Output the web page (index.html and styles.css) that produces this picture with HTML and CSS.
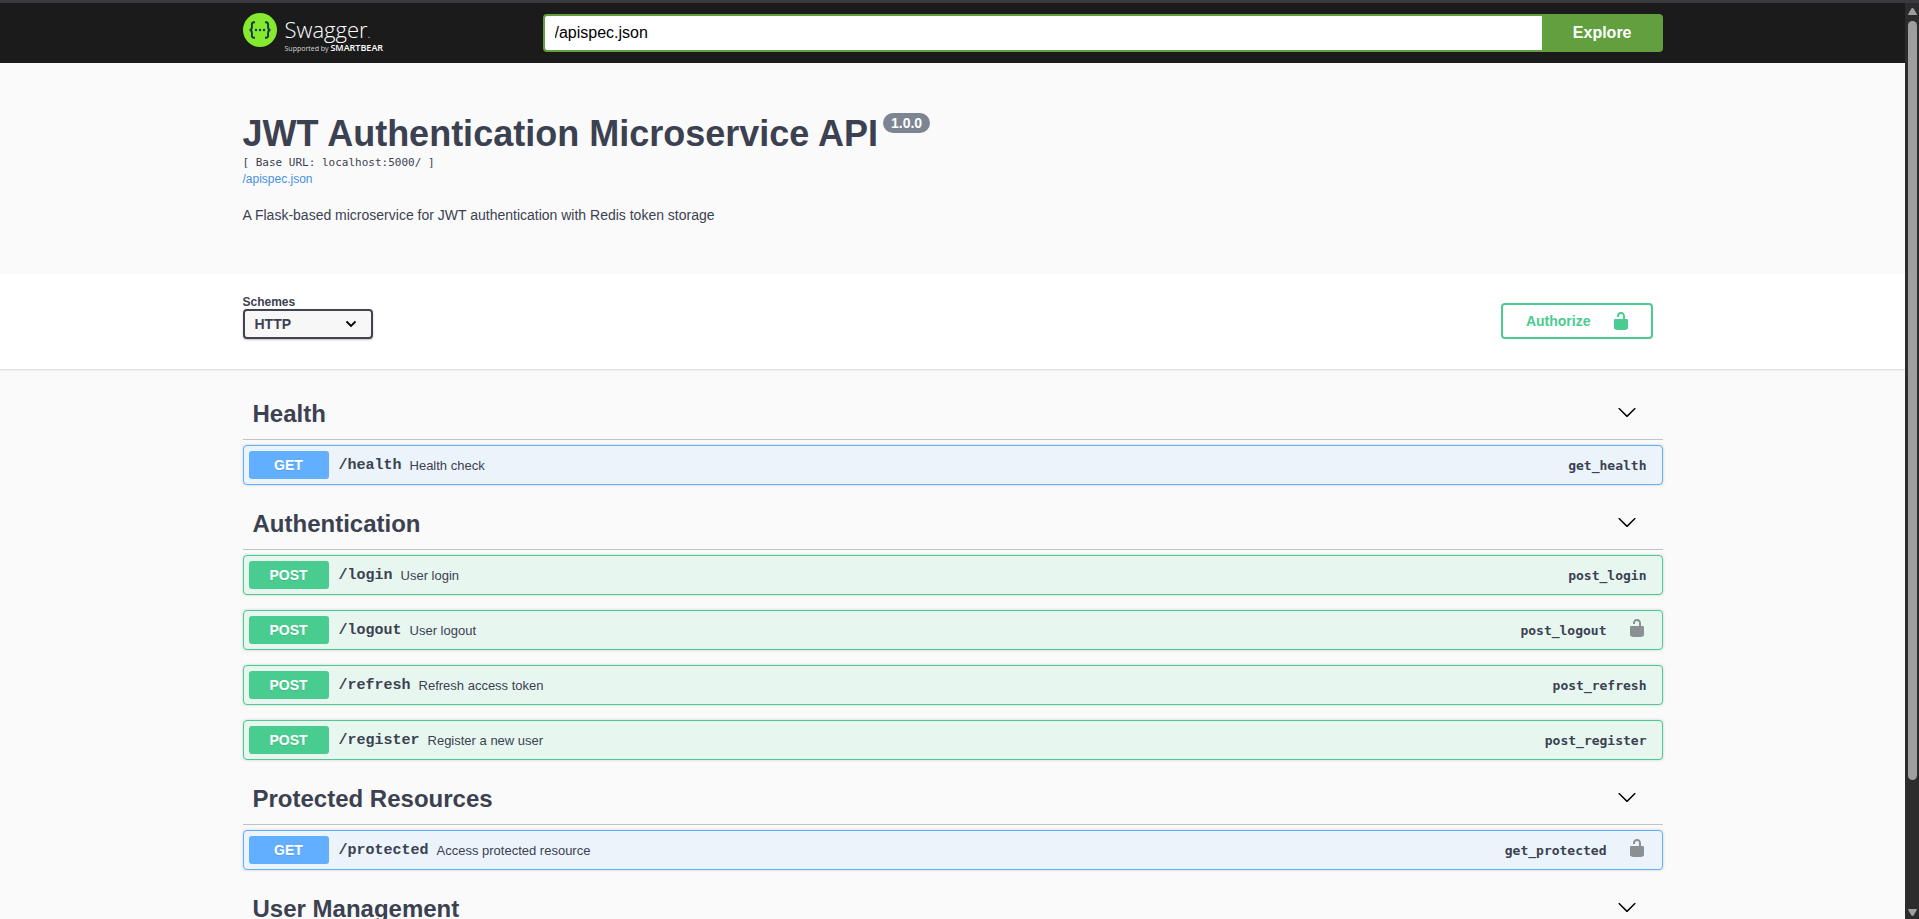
FILE: index.html
```html
<!DOCTYPE html>
<html lang="en">
<head>
<meta charset="utf-8">
<meta name="viewport" content="width=device-width, initial-scale=1">
<title>JWT Authentication Microservice API</title>
<link rel="stylesheet" href="styles.css">
</head>
<body>
<svg class="symbols" aria-hidden="true">
  <symbol id="unlocked" viewBox="0 0 20 20"><path d="M15.8 8H14V5.6C14 2.703 12.665 1 10 1 7.334 1 6 2.703 6 5.6V6h2v-.801C8 3.754 8.797 3 10 3c1.203 0 2 .754 2 2.199V8H4c-.553 0-1 .646-1 1.199V17c0 .549.428 1.139.951 1.307l1.197.387C5.672 18.861 6.55 19 7.1 19h5.8c.549 0 1.428-.139 1.951-.307l1.196-.387c.524-.167.953-.757.953-1.306V9.199C17 8.646 16.352 8 15.8 8z"/></symbol>
  <symbol id="arrow" viewBox="0 0 20 20"><path d="M17.418 6.109c.272-.268.709-.268.979 0s.271.701 0 .969l-7.908 7.83c-.27.268-.707.268-.979 0l-7.908-7.83c-.27-.268-.27-.701 0-.969.271-.268.709-.268.979 0L10 13.25l7.418-7.141z"/></symbol>
</svg>
<div class="edge"></div>
<div class="frame">
  <div class="page">
    <header class="topbar">
      <div class="wrapper topbar-inner">
        <a class="logo" href="#" aria-label="Swagger">
          <svg class="logo-mark" viewBox="0 0 34 34" aria-hidden="true">
            <circle cx="17" cy="17" r="17" fill="#85ea2d"/>
            <g fill="none" stroke="#173647" stroke-width="1.9">
              <path d="M12 9.3h-1c-1.500 0-2.100.7-2.100 2.200v2.700c0 1.700-.6 2.600-2.200 2.800 1.600.2 2.200 1.100 2.200 2.800v2.700c0 1.500.6 2.200 2.100 2.200h1"/>
              <path d="M22 9.300h1c1.500 0 2.100.7 2.100 2.200v2.700c0 1.700.6 2.600 2.200 2.800-1.600.2-2.200 1.100-2.200 2.800v2.700c0 1.500-.6 2.200-2.100 2.200h-1"/>
            </g>
            <g fill="#173647"><circle cx="13" cy="17" r="1.200"/><circle cx="17" cy="17" r="1.200"/><circle cx="21" cy="17" r="1.200"/></g>
          </svg>
          <span class="logo-text">
            <span class="logo-name">Swagger<span class="logo-dot">.</span></span>
            <span class="logo-by">Supported by <b>SMARTBEAR</b></span>
          </span>
        </a>
        <form class="download">
          <input type="text" class="download-url" value="/apispec.json" aria-label="Specification URL">
          <button type="button" class="download-btn">Explore</button>
        </form>
      </div>
    </header>

    <section class="wrapper info">
      <h1 class="title">JWT Authentication Microservice API<span class="version">1.0.0</span></h1>
      <div class="base-url">[ Base URL: localhost:5000/ ]</div>
      <a class="spec-link" href="#">/apispec.json</a>
      <p class="description">A Flask-based microservice for JWT authentication with Redis token storage</p>
    </section>

    <section class="schemes">
      <div class="wrapper schemes-inner">
        <div class="scheme">
          <label for="schemes">Schemes</label>
          <div class="select">
            <select id="schemes"><option>HTTP</option></select>
            <svg viewBox="0 0 12 8" aria-hidden="true"><path d="M1.500 1.500 6 6l4.500-4.500" fill="none" stroke="#000" stroke-width="1.800"/></svg>
          </div>
        </div>
        <button type="button" class="authorize">Authorize<svg class="lock" aria-hidden="true"><use href="#unlocked"/></svg></button>
      </div>
    </section>

    <main class="wrapper operations">
      <section>
        <div class="tag"><h2>Health</h2><button type="button" class="expand" aria-label="Collapse Health"><svg><use href="#arrow"/></svg></button></div>
        <div class="op get"><button type="button" class="summary"><span class="method">GET</span><span class="path">/health</span><span class="desc">Health check</span><span class="op-id">get_health</span></button></div>
      </section>
      <section>
        <div class="tag"><h2>Authentication</h2><button type="button" class="expand" aria-label="Collapse Authentication"><svg><use href="#arrow"/></svg></button></div>
        <div class="op post"><button type="button" class="summary"><span class="method">POST</span><span class="path">/login</span><span class="desc">User login</span><span class="op-id">post_login</span></button></div>
        <div class="op post"><button type="button" class="summary"><span class="method">POST</span><span class="path">/logout</span><span class="desc">User logout</span><span class="op-id">post_logout</span></button><button type="button" class="op-auth" aria-label="Authorization"><svg class="lock"><use href="#unlocked"/></svg></button></div>
        <div class="op post"><button type="button" class="summary"><span class="method">POST</span><span class="path">/refresh</span><span class="desc">Refresh access token</span><span class="op-id">post_refresh</span></button></div>
        <div class="op post"><button type="button" class="summary"><span class="method">POST</span><span class="path">/register</span><span class="desc">Register a new user</span><span class="op-id">post_register</span></button></div>
      </section>
      <section>
        <div class="tag"><h2>Protected Resources</h2><button type="button" class="expand" aria-label="Collapse Protected Resources"><svg><use href="#arrow"/></svg></button></div>
        <div class="op get"><button type="button" class="summary"><span class="method">GET</span><span class="path">/protected</span><span class="desc">Access protected resource</span><span class="op-id">get_protected</span></button><button type="button" class="op-auth" aria-label="Authorization"><svg class="lock"><use href="#unlocked"/></svg></button></div>
      </section>
      <section>
        <div class="tag"><h2>User Management</h2><button type="button" class="expand" aria-label="Collapse User Management"><svg><use href="#arrow"/></svg></button></div>
      </section>
    </main>
  </div>
  <div class="scrollbar" aria-hidden="true">
    <svg class="scroll-arrow" viewBox="0 0 9 7"><path d="M4.500 0c.6 0 .9.300 1.200.8L8.800 6c.3.600 0 1-.6 1H.8C.2 7-.1 6.600.2 6L3.300.8C3.600.3 3.900 0 4.500 0z"/></svg>
    <div class="track"><div class="thumb"></div></div>
    <svg class="scroll-arrow down" viewBox="0 0 9 7"><path d="M4.500 7c.6 0 .9-.300 1.200-.8L8.800 1c.3-.600 0-1-.6-1H.8C.2 0-.1.400.2 1l3.100 5.200c.3.500.6.8 1.200.8z"/></svg>
  </div>
</div>
</body>
</html>
```
FILE: styles.css
```css
* { box-sizing: border-box; }

body {
  margin: 0;
  height: 100vh;
  display: flex;
  flex-direction: column;
  overflow: hidden;
  background: #fafafa;
  color: #3b4151;
  font-family: "Liberation Sans", Arial, sans-serif;
}

button, input, select { font: inherit; color: inherit; }
button { cursor: pointer; background: none; border: 0; padding: 0; }
svg { display: block; flex: none; }

.symbols { position: absolute; width: 0; height: 0; }
.edge { flex: none; height: 3px; background: #3a3940; }

.frame { flex: 1; min-height: 0; display: flex; }
.page { flex: 1; min-width: 0; overflow: hidden; }

.wrapper {
  width: 100%;
  max-width: 1460px;
  margin: 0 auto;
  padding: 0 20px;
}

/* Top bar */
.topbar { background: #1b1b1b; padding: 10px 0; }
.topbar-inner { display: flex; align-items: center; height: 40px; }

.logo {
  display: flex;
  align-items: flex-start;
  gap: 8px;
  width: 300px;
  height: 40px;
  color: #fff;
  text-decoration: none;
}
.logo-mark { width: 34px; height: 34px; }
.logo-text {
  display: flex;
  flex-direction: column;
  font-family: "Open Sans", "Noto Sans", sans-serif;
  white-space: nowrap;
}
.logo-name { font-size: 22px; font-weight: 300; line-height: 32px; }
.logo-dot { font-size: 12px; line-height: 12px; }
.logo-by { font-size: 7px; line-height: 6px; color: #d8d8d8; }
.logo-by b { font-size: 9px; font-weight: 600; color: #fff; }

.download { flex: 1; display: flex; height: 38px; }
.download-url {
  flex: 1;
  min-width: 0;
  padding: 0 10px;
  border: 2px solid #62a03f;
  border-right: 0;
  border-radius: 4px 0 0 4px;
  background: #fff;
  color: #000;
  font-size: 16px;
  outline: none;
}
.download-btn {
  padding: 0 31px;
  border-radius: 0 4px 4px 0;
  background: #62a03f;
  color: #fff;
  font-size: 16px;
  font-weight: 700;
}

/* API information */
.info { padding-top: 50px; padding-bottom: 50px; }
.title { display: flex; align-items: flex-start; gap: 5px; margin: 0; font-size: 36px; line-height: 42px; }
.version {
  padding: 0 8px;
  border-radius: 20px;
  background: #7d8492;
  color: #fff;
  font-size: 14px;
  line-height: 20px;
}
.base-url { font-family: "DejaVu Sans Mono", monospace; font-size: 11px; line-height: 16px; }
.spec-link { display: block; color: #4990e2; font-size: 12px; line-height: 16px; text-decoration: none; }
.description { margin: 20px 0 0; font-size: 14px; line-height: 17px; }

/* Schemes */
.schemes { background: #fff; padding: 21px 0 30px; box-shadow: 0 1px 2px rgba(0, 0, 0, .15); }
.schemes-inner { display: flex; justify-content: space-between; align-items: flex-end; }
.scheme label { display: block; font-size: 12px; font-weight: 700; line-height: 14px; }
.select { position: relative; width: 130px; }
.select select {
  display: block;
  width: 100%;
  height: 30px;
  padding: 0 10px;
  appearance: none;
  border: 2px solid #41444e;
  border-radius: 4px;
  background: #f7f7f7;
  box-shadow: 0 1px 2px rgba(0, 0, 0, .25);
  font-size: 14px;
  font-weight: 700;
}
.select svg { position: absolute; right: 16px; top: 11px; width: 12px; height: 8px; pointer-events: none; }
.authorize {
  display: flex;
  align-items: center;
  gap: 20px;
  height: 36px;
  margin-right: 10px;
  padding: 0 20px 0 23px;
  border: 2px solid #49cc90;
  border-radius: 4px;
  color: #49cc90;
  font-size: 14px;
  font-weight: 700;
}
.lock { width: 20px; height: 20px; fill: currentColor; }

/* Operations */
.operations { padding-top: 21px; }
.tag {
  display: flex;
  align-items: center;
  height: 50px;
  margin-bottom: 5px;
  padding: 0 26px 6px 10px;
  border-bottom: 1px solid rgba(59, 65, 81, .3);
}
.tag h2 { flex: 1; margin: 0; padding-top: 4px; font-size: 24px; line-height: 28px; }
.expand svg { width: 20px; height: 20px; fill: #000; }

.op {
  display: flex;
  align-items: center;
  margin-bottom: 15px;
  padding: 5px;
  border: 1px solid;
  border-radius: 4px;
  box-shadow: 0 0 3px rgba(0, 0, 0, .19);
}
.get { border-color: #61affe; background: #ebf3fb; }
.post { border-color: #49cc90; background: #e8f6f0; }
.summary { flex: 1; display: flex; align-items: center; text-align: left; }
.method {
  width: 80px;
  border-radius: 3px;
  color: #fff;
  font-size: 14px;
  font-weight: 700;
  line-height: 28px;
  text-align: center;
  text-shadow: 0 1px 0 rgba(0, 0, 0, .1);
}
.get .method { background: #61affe; }
.post .method { background: #49cc90; }
.path { padding: 0 8px 0 10px; font-family: "Liberation Mono", monospace; font-size: 15px; font-weight: 700; }
.desc { flex: 1; font-size: 13px; }
.op-id { padding-right: 10px; font-family: "DejaVu Sans Mono", monospace; font-size: 13px; font-weight: 700; }
.op-auth { padding: 0 10px 4px; color: #8b9095; }

/* Scrollbar */
.scrollbar {
  display: flex;
  flex-direction: column;
  align-items: center;
  gap: 6px;
  width: 14px;
  padding: 5px 0 3px 1px;
  background: #2c2c2c;
}
.scroll-arrow { width: 9px; height: 7px; fill: #9f9f9f; }
.track { flex: 1; width: 9px; }
.thumb { height: 86%; border-radius: 5px; background: #9f9f9f; }
```
